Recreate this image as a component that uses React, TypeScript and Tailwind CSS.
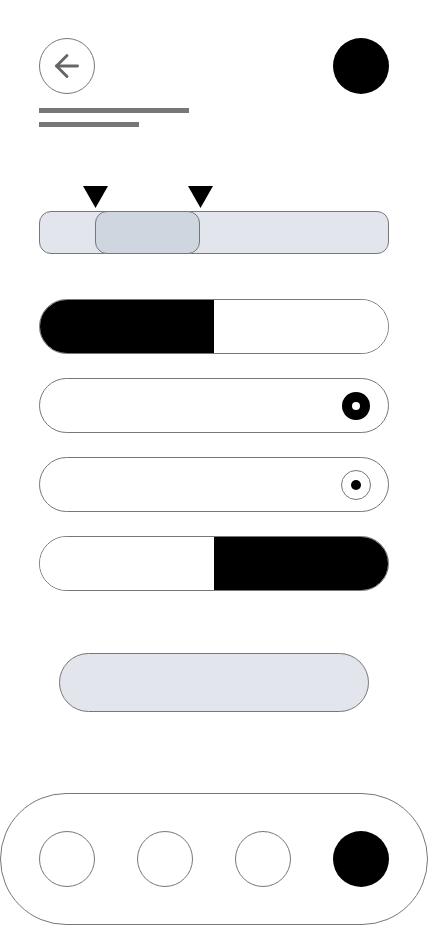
import { ArrowLeft } from "lucide-react";

const Triangle = ({ left }: { left: number }) => (
  <svg
    className="absolute top-0"
    style={{ left: left - 12.5 }}
    width="25"
    height="22"
    viewBox="0 0 25 22"
  >
    <polygon points="0,0 25,0 12.5,22" fill="#000" />
  </svg>
);

const SplitToggle = ({ on }: { on: "left" | "right" }) => (
  <div className="flex h-[55px] w-full overflow-hidden rounded-full border border-[#777]">
    <div className={`h-full w-1/2 ${on === "left" ? "bg-black" : "bg-white"}`} />
    <div className={`h-full w-1/2 ${on === "right" ? "bg-black" : "bg-white"}`} />
  </div>
);

const RadioRow = ({ filled }: { filled: boolean }) => (
  <div className="flex h-[55px] w-full items-center justify-end rounded-full border border-[#777] pr-[17px]">
    <div className="flex h-[30px] w-[30px] items-center justify-center">
      {filled ? (
        <div className="flex h-[28px] w-[28px] items-center justify-center rounded-full bg-black">
          <div className="h-[8px] w-[8px] rounded-full bg-white" />
        </div>
      ) : (
        <div className="flex h-[30px] w-[30px] items-center justify-center rounded-full border border-[#777]">
          <div className="h-[10px] w-[10px] rounded-full bg-black" />
        </div>
      )}
    </div>
  </div>
);

export default function App() {
  return (
    <div className="flex min-h-screen w-full flex-col bg-white">
      <div className="flex items-center justify-between px-[39px] pt-[38px]">
        <button className="flex h-[56px] w-[56px] items-center justify-center rounded-full border border-[#777] text-[#666]">
          <ArrowLeft size={36} strokeWidth={1.9} />
        </button>
        <div className="h-[56px] w-[56px] rounded-full bg-black" />
      </div>

      <div className="mt-[14px] flex flex-col gap-[9px] px-[39px]">
        <div className="h-[5px] w-[150px] bg-[#777]" />
        <div className="h-[5px] w-[100px] bg-[#777]" />
      </div>

      <div className="mt-[59px] px-[39px]">
        <div className="relative h-[25px]">
          <Triangle left={56.5} />
          <Triangle left={161.5} />
        </div>
        <div className="relative h-[43px] w-full rounded-[12px] border border-[#777] bg-[#e2e6ec]">
          <div className="absolute -top-px -bottom-px left-[55px] w-[105px] rounded-[12px] border border-[#777] bg-[#cfd6df]" />
        </div>
      </div>

      <div className="mt-[45px] flex flex-col gap-[24px] px-[39px]">
        <SplitToggle on="left" />
        <RadioRow filled />
        <RadioRow filled={false} />
        <SplitToggle on="right" />
      </div>

      <div className="mt-[62px] flex justify-center">
        <button className="h-[59px] w-[310px] rounded-full border border-[#777] bg-[#e2e6ec]" />
      </div>

      <div className="mt-[81px] flex h-[132px] w-full items-center gap-[42px] rounded-full border border-[#777] pl-[38px]">
        <div className="h-[56px] w-[56px] rounded-full border border-[#777]" />
        <div className="h-[56px] w-[56px] rounded-full border border-[#777]" />
        <div className="h-[56px] w-[56px] rounded-full border border-[#777]" />
        <div className="h-[56px] w-[56px] rounded-full bg-black" />
      </div>
    </div>
  );
}
